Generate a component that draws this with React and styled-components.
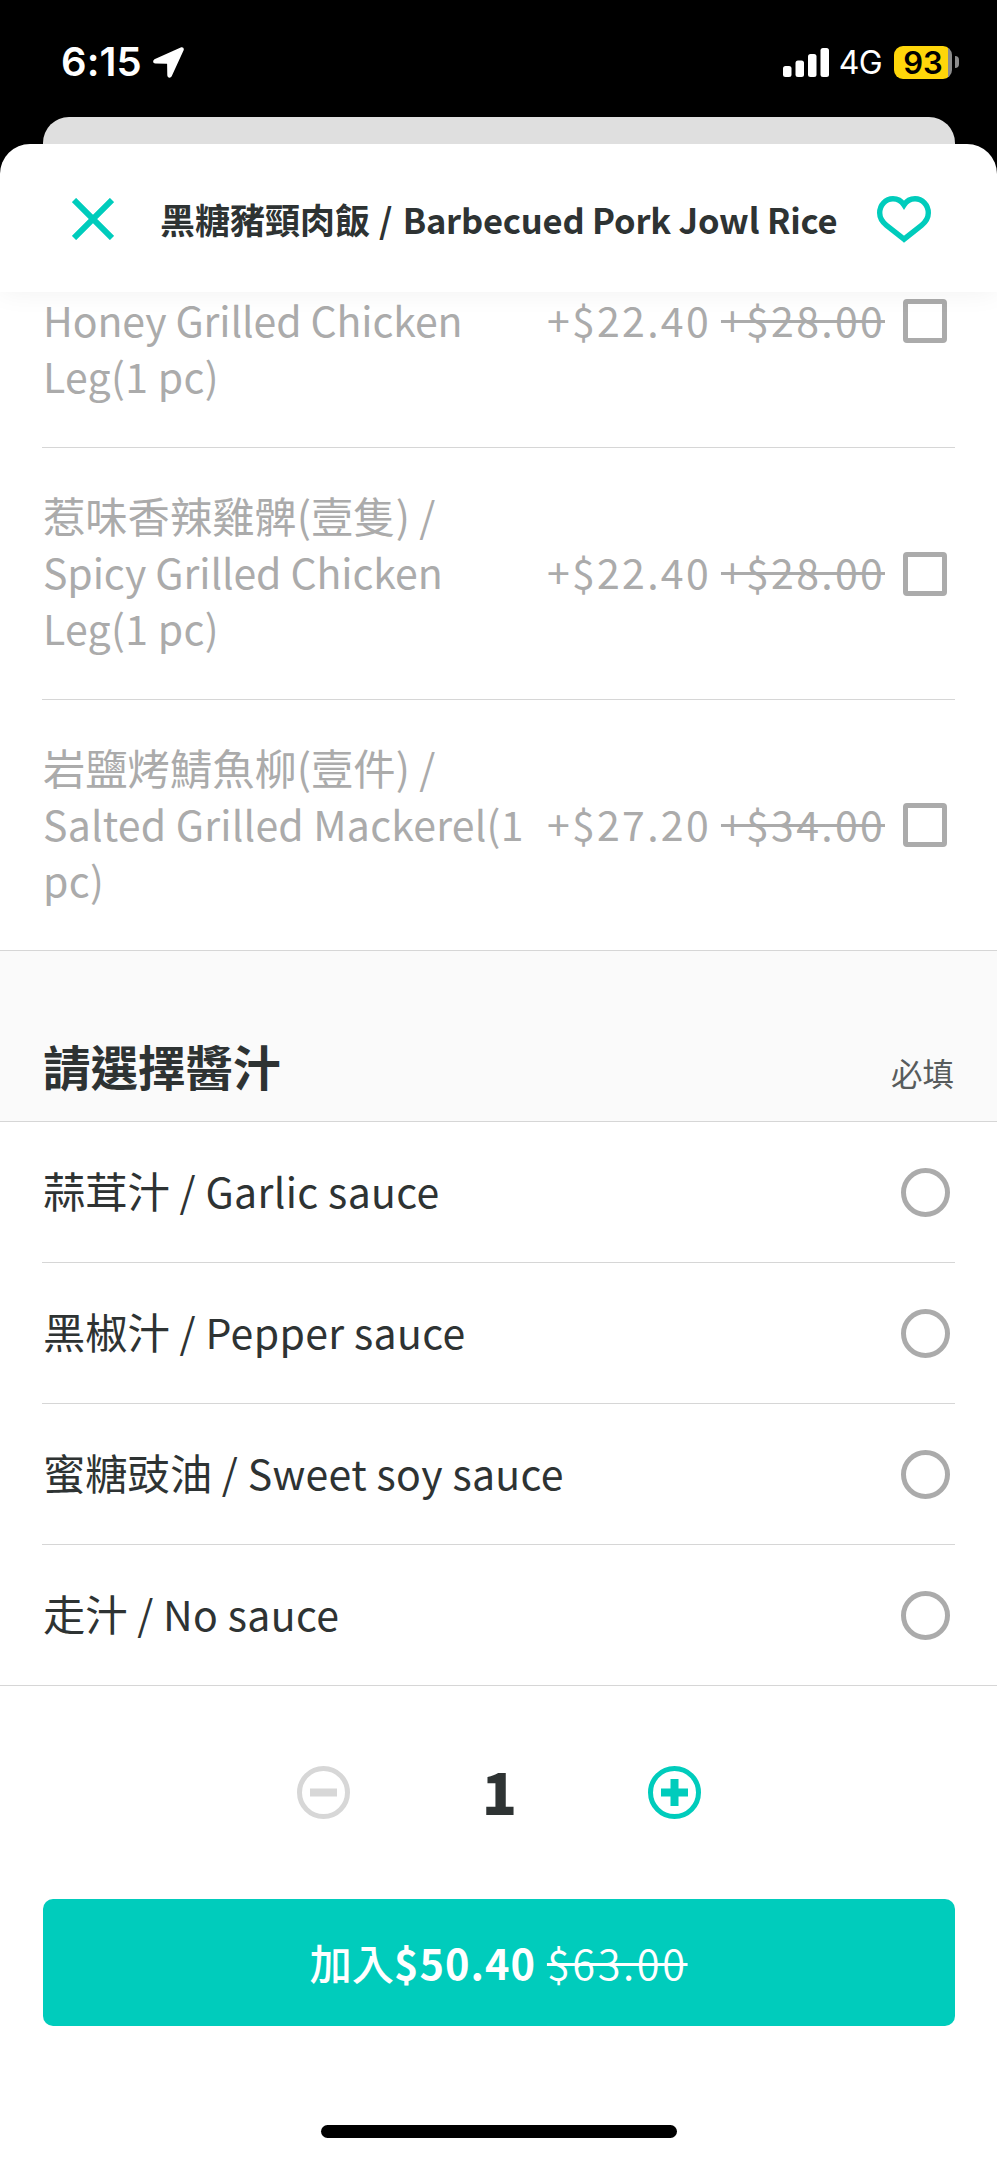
import React, { useState } from "react";
import styled, { createGlobalStyle } from "styled-components";

const GlobalStyle = createGlobalStyle`
  * {
    box-sizing: border-box;
  }
  body {
    margin: 0;
    background: #000;
    font-family: "Noto Sans CJK TC", "Noto Sans", sans-serif;
    color: #2e3333;
  }
  button {
    font: inherit;
    color: inherit;
    padding: 0;
    border: none;
    background: none;
  }
`;

const Screen = styled.div`
  display: flex;
  flex-direction: column;
  width: 997px;
  height: 2160px;
  overflow: hidden;
  background: #000;
`;

const StatusBar = styled.div`
  display: flex;
  align-items: center;
  flex: none;
  height: 117px;
  padding: 7px 38px 0 61px;
  font-family: Inter, sans-serif;
  color: #fff;
`;

const Time = styled.span`
  font-size: 40px;
  font-weight: 600;
  line-height: 48px;
  letter-spacing: 0.1px;
  margin-right: 11px;
`;

const Network = styled.span`
  font-size: 32px;
  line-height: 40px;
  letter-spacing: -0.6px;
  margin: 2px 12px 0 10px;
`;

const Signal = styled.svg`
  margin-left: auto;
`;

const Battery = styled.div`
  display: flex;
  align-items: center;
`;

const BatteryBody = styled.div`
  width: 58px;
  height: 33px;
  border-radius: 9px;
  background: linear-gradient(90deg, #ffd60a 54px, #8c8c8c 54px);
  color: #000;
  font-size: 31px;
  font-weight: 600;
  line-height: 33px;
  text-align: center;
`;

const BatteryTip = styled.div`
  width: 4px;
  height: 12px;
  margin-left: 3px;
  border-radius: 0 6px 6px 0;
  background: #8c8c8c;
`;

const BackSheet = styled.div`
  flex: none;
  height: 27px;
  margin: 0 42px 0 43px;
  border-radius: 26px 26px 0 0;
  background: #dfdfdf;
`;

const Sheet = styled.div`
  display: flex;
  flex-direction: column;
  flex: 1;
  min-height: 0;
  border-radius: 30px 30px 0 0;
  background: #fff;
  overflow: hidden;
`;

const Header = styled.header`
  display: flex;
  align-items: center;
  flex: none;
  height: 148px;
  padding: 2px 66px 0 72px;
  box-shadow: 0 0 26px rgba(0, 0, 0, 0.06);
  z-index: 1;
`;

const Title = styled.h1`
  flex: 1;
  margin: 0 0 0 46px;
  padding-bottom: 1px;
  font-size: 35px;
  font-weight: 700;
  line-height: 50px;
  white-space: nowrap;
`;

const IconButton = styled.button`
  display: flex;
`;

const Latin = styled.span`
  font-size: ${({ $size }) => $size || 41}px;
  letter-spacing: ${({ $spacing }) => $spacing || 0}px;
`;

const Content = styled.main`
  flex: none;
  height: 1394px;
  overflow: hidden;
`;

const List = styled.div`
  padding: 0 42px;
  border-bottom: 1px solid #d6d6d6;
`;

const Name = styled.span`
  flex: 1;
  padding-bottom: 5px;
`;

const Price = styled.span`
  padding-bottom: 5px;
  margin-right: 18px;
`;

const OldPrice = styled.s`
  margin-left: ${({ $gap }) => $gap}px;
  text-decoration-thickness: 3px;
`;

const Checkbox = styled.span`
  width: 44px;
  height: 44px;
  border: 5px solid #ababab;
  border-radius: 4px;
`;

const Radio = styled.span`
  width: 49px;
  height: 49px;
  border: 5px solid #ababab;
  border-radius: 50%;
`;

const Row = styled.label`
  display: flex;
  align-items: center;
  height: 141px;
  padding: 0 5px 0 1px;
  border-bottom: 1px solid #d6d6d6;
  font-size: 42.3px;
  line-height: 55px;
  white-space: nowrap;

  &:last-child {
    height: 140px;
    border-bottom: none;
  }
`;

const ExtraRow = styled(Row)`
  height: 252px;
  padding-right: 8px;
  color: #ababab;

  /* scrolled half way under the header */
  &:first-child {
    align-items: flex-start;
    height: 157px;
    margin-top: -1px;
  }
  &:first-child ${Checkbox} {
    margin-top: 8px;
  }
  &:last-child {
    height: 250px;
  }
`;

const SectionHead = styled.div`
  display: flex;
  align-items: flex-end;
  justify-content: space-between;
  height: 171px;
  padding: 0 43px 20px;
  border-bottom: 1px solid #d6d6d6;
  background: #fafafa;
`;

const SectionTitle = styled.h2`
  margin: 0;
  font-size: 47.5px;
  font-weight: 700;
  line-height: 70px;
`;

const Required = styled.span`
  color: #585c5c;
  font-size: 31.5px;
  line-height: 57px;
`;

const Footer = styled.footer`
  display: flex;
  flex-direction: column;
  align-items: center;
  flex: 1;
  padding: 80px 43px 0;
`;

const Stepper = styled.div`
  display: grid;
  grid-template-columns: 53px 298px 53px;
  align-items: center;
  height: 53px;
`;

const Quantity = styled.span`
  padding: 0 0 5px 2px;
  font-size: 58px;
  font-weight: 900;
  line-height: 48px;
  text-align: center;
`;

const AddButton = styled.button`
  flex: none;
  width: 912px;
  height: 127px;
  margin: 80px 0 99px;
  padding-bottom: 2px;
  border-radius: 10px;
  background: #00ccbc;
  color: #fff;
  font-size: 42.3px;
  font-weight: 500;
  line-height: 60px;
  white-space: nowrap;

  s {
    font-weight: 350;
    letter-spacing: 2.6px;
  }
`;

const HomeBar = styled.div`
  width: 356px;
  height: 13px;
  border-radius: 7px;
  background: #000;
`;

const extras = [
  {
    lines: ["Honey Grilled Chicken", "Leg(1 pc)"],
    price: "+$22.40",
    oldPrice: "+$28.00",
    spacing: -0.12,
  },
  {
    zh: "惹味香辣雞髀(壹隻)",
    lines: ["Spicy Grilled Chicken", "Leg(1 pc)"],
    price: "+$22.40",
    oldPrice: "+$28.00",
    spacing: -0.1,
  },
  {
    zh: "岩鹽烤鯖魚柳(壹件)",
    lines: ["Salted Grilled Mackerel(1", "pc)"],
    price: "+$27.20",
    oldPrice: "+$34.00",
    spacing: 0.2,
  },
];

const sauces = [
  { zh: "蒜茸汁", en: "Garlic sauce" },
  { zh: "黑椒汁", en: "Pepper sauce" },
  { zh: "蜜糖豉油", en: "Sweet soy sauce" },
  { zh: "走汁", en: "No sauce" },
];

export default function App() {
  const [quantity, setQuantity] = useState(1);

  return (
    <>
      <GlobalStyle />
      <Screen>
        <StatusBar>
          <Time>6:15</Time>
          <svg width="31" height="31" viewBox="0 0 31 31" fill="#fff">
            <path d="M27.7.4 2 12C-.7 13.300-.3 16.400 2.400 16.500l11.300.2c.3 0 .4.1.4.4l.2 11.200c.1 2.900 3.300 3.400 4.500.8L30.500 3.600C31.500 1.200 29.900-.5 27.700.4Z" />
          </svg>
          <Signal width="46" height="29" viewBox="0 0 46 29" fill="#fff">
            <rect x="0" y="18" width="8.500" height="11" rx="2.500" />
            <rect x="12.500" y="12.500" width="8.500" height="16.500" rx="2.500" />
            <rect x="25" y="6" width="8.500" height="23" rx="2.500" />
            <rect x="37.500" y="0" width="8.500" height="29" rx="2.500" />
          </Signal>
          <Network>4G</Network>
          <Battery>
            <BatteryBody>93</BatteryBody>
            <BatteryTip />
          </Battery>
        </StatusBar>
        <BackSheet />
        <Sheet>
          <Header>
            <IconButton>
              <svg width="42" height="42" viewBox="0 0 42 42">
                <path
                  d="M2 2 40 40M40 2 2 40"
                  stroke="#00ccbc"
                  strokeWidth="6"
                />
              </svg>
            </IconButton>
            <Title>
              黑糖豬頸肉飯
              <Latin $size={34.5} $spacing={1.2}>
                {" / "}
              </Latin>
              <Latin $size={34.5} $spacing={-0.2}>
                Barbecued Pork Jowl Rice
              </Latin>
            </Title>
            <IconButton>
              <svg width="54" height="47" viewBox="0 0 54 47">
                <path
                  d="M27 43.200 9.500 29.300C4.500 25.300 2.700 21.500 2.700 17 2.700 9 8.700 2.800 16 2.800c4.700 0 8.400 2.200 11 6.200 2.600-4 6.300-6.200 11-6.200 7.300 0 13.300 6.200 13.300 14.200 0 4.500-1.800 8.300-6.800 12.300Z"
                  fill="none"
                  stroke="#00ccbc"
                  strokeWidth="5.400"
                />
              </svg>
            </IconButton>
          </Header>
          <Content>
            <List>
              {extras.map(({ zh, lines, price, oldPrice, spacing }) => (
                <ExtraRow key={lines[0]}>
                  <Name>
                    {zh && (
                      <>
                        {zh}
                        <Latin> /</Latin>
                        <br />
                      </>
                    )}
                    <Latin $spacing={spacing}>{lines[0]}</Latin>
                    <br />
                    <Latin $spacing={0.3}>{lines[1]}</Latin>
                  </Name>
                  <Price>
                    <Latin $spacing={2.3}>
                      {price}
                      <OldPrice $gap={10}>{oldPrice}</OldPrice>
                    </Latin>
                  </Price>
                  <Checkbox />
                </ExtraRow>
              ))}
            </List>
            <SectionHead>
              <SectionTitle>請選擇醬汁</SectionTitle>
              <Required>必填</Required>
            </SectionHead>
            <List>
              {sauces.map(({ zh, en }) => (
                <Row key={zh}>
                  <Name>
                    {zh}
                    <Latin $spacing={0.35}>{" / " + en}</Latin>
                  </Name>
                  <Radio />
                </Row>
              ))}
            </List>
          </Content>
          <Footer>
            <Stepper>
              <IconButton
                onClick={() => setQuantity(Math.max(1, quantity - 1))}
              >
                <svg width="53" height="53" viewBox="0 0 53 53">
                  <circle
                    cx="26.500"
                    cy="26.500"
                    r="24"
                    fill="none"
                    stroke="#d7d7d7"
                    strokeWidth="5"
                  />
                  <path d="M13 26.500h27" stroke="#d7d7d7" strokeWidth="8" />
                </svg>
              </IconButton>
              <Quantity>{quantity}</Quantity>
              <IconButton onClick={() => setQuantity(quantity + 1)}>
                <svg width="53" height="53" viewBox="0 0 53 53">
                  <circle
                    cx="26.500"
                    cy="26.500"
                    r="24"
                    fill="none"
                    stroke="#00ccbc"
                    strokeWidth="5"
                  />
                  <path
                    d="M13 26.500h27M26.500 13v27"
                    stroke="#00ccbc"
                    strokeWidth="8"
                  />
                </svg>
              </IconButton>
            </Stepper>
            <AddButton>
              加入
              <Latin $size={41.5} $spacing={1}>
                <b>$50.40</b>
                <OldPrice $gap={11}>$63.00</OldPrice>
              </Latin>
            </AddButton>
            <HomeBar />
          </Footer>
        </Sheet>
      </Screen>
    </>
  );
}
